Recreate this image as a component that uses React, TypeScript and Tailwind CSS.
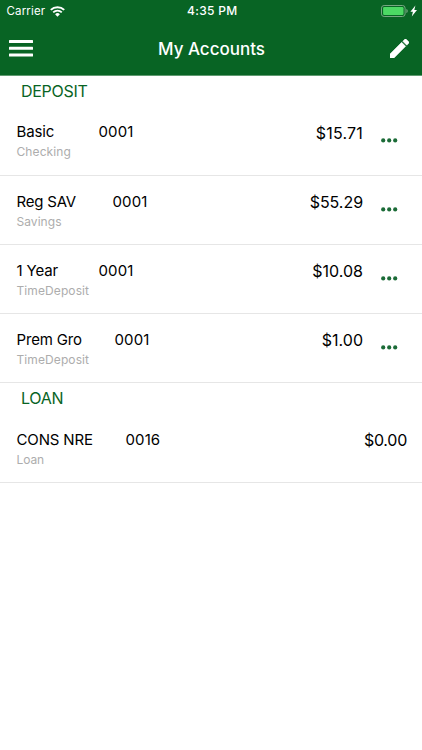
import React from 'react';

type Account = {
  name: string;
  nameClass: string;
  number: string;
  type: string;
  typeClass: string;
  balance: string;
  balanceClass: string;
  hasMenu: boolean;
};

const sections: { title: string; accounts: Account[] }[] = [
  {
    title: 'DEPOSIT',
    accounts: [
      { name: 'Basic', nameClass: 'w-[82px] tracking-[-0.15px]', number: '0001', type: 'Checking', typeClass: 'tracking-[0.1px]', balance: '$15.71', balanceClass: 'tracking-[0.2px]', hasMenu: true },
      { name: 'Reg SAV', nameClass: 'w-[96px] tracking-[-0.2px]', number: '0001', type: 'Savings', typeClass: 'tracking-[0.05px]', balance: '$55.29', balanceClass: 'tracking-[-0.05px]', hasMenu: true },
      { name: '1 Year', nameClass: 'w-[82px] tracking-[-0.15px]', number: '0001', type: 'TimeDeposit', typeClass: 'tracking-[0.1px]', balance: '$10.08', balanceClass: '', hasMenu: true },
      { name: 'Prem Gro', nameClass: 'w-[98px] tracking-[-0.15px]', number: '0001', type: 'TimeDeposit', typeClass: 'tracking-[0.1px]', balance: '$1.00', balanceClass: '', hasMenu: true },
    ],
  },
  {
    title: 'LOAN',
    accounts: [
      { name: 'CONS NRE', nameClass: 'w-[109px] tracking-[-0.15px]', number: '0016', type: 'Loan', typeClass: 'tracking-[-0.1px]', balance: '$0.00', balanceClass: 'tracking-[-0.25px]', hasMenu: false },
    ],
  },
];

function WifiIcon() {
  return (
    <svg width="15" height="11" viewBox="0 0 15 11" fill="none">
      <path d="M0.8 3.9a9.6 9.6 0 0 1 13.4 0" stroke="white" strokeWidth="2" />
      <path d="M3.2 6.4a6.1 6.1 0 0 1 8.6 0" stroke="white" strokeWidth="1.8" />
      <path d="M5.1 8.3a3.4 3.4 0 0 1 4.8 0L7.5 10.7z" fill="white" />
    </svg>
  );
}

function BatteryIcon() {
  return (
    <svg width="37" height="12" viewBox="0 0 37 12" fill="none">
      <rect x="0.5" y="0.5" width="23.6" height="11" rx="2.6" stroke="#78a783" />
      <rect x="2.1" y="2.1" width="20.4" height="7.8" rx="1.2" fill="#4cd964" />
      <path d="M25.4 4v4c.8-.3 1.3-1.1 1.3-2s-.5-1.7-1.3-2z" fill="#78a783" />
      <path d="M34.4 0.6 29.4 6.8h2.5L30.8 11.6l5.2-6.6h-2.7z" fill="white" />
    </svg>
  );
}

function MenuIcon() {
  return (
    <svg width="24" height="17" viewBox="0 0 24 17" fill="white">
      <rect y="0.1" width="24" height="2.9" rx="0.5" />
      <rect y="6.8" width="24" height="2.9" rx="0.5" />
      <rect y="13.5" width="24" height="2.9" rx="0.5" />
    </svg>
  );
}

function PencilIcon() {
  return (
    <svg width="19" height="19" viewBox="3 3 18 18" fill="white" stroke="white" strokeWidth="0.5">
      <path d="M3 17.25V21h3.75L17.81 9.94l-3.75-3.75L3 17.25zM20.71 7.04a1 1 0 0 0 0-1.41l-2.34-2.34a1 1 0 0 0-1.41 0l-1.83 1.83 3.75 3.75 1.83-1.83z" />
    </svg>
  );
}

function DotsIcon() {
  return (
    <svg width="17" height="5" viewBox="0 0 17 5" fill="#1b6b37">
      <circle cx="2.2" cy="2.4" r="2.1" />
      <circle cx="8.2" cy="2.4" r="2.1" />
      <circle cx="14.2" cy="2.4" r="2.1" />
    </svg>
  );
}

function AccountRow({ account }: { account: Account }) {
  return (
    <li className="flex h-[69.2px] items-start border-b border-[#e6e6e6] pl-[16.5px] text-black">
      <div className="flex-1 pt-[15.8px]">
        <div className="flex text-[15px] leading-5">
          <span className={account.nameClass}>{account.name}</span>
          <span className="tracking-[0.1px]">{account.number}</span>
        </div>
        <div className={`text-[12px] leading-5 text-[#adadad] ${account.typeClass}`}>{account.type}</div>
      </div>
      <span
        className={`pt-[16.3px] text-base leading-5 ${account.hasMenu ? 'pr-[18px]' : 'pr-[15px]'} ${account.balanceClass}`}
      >
        {account.balance}
      </span>
      {account.hasMenu && (
        <button className="mr-6 mt-[31px]" aria-label="More">
          <DotsIcon />
        </button>
      )}
    </li>
  );
}

export default function App() {
  return (
    <div className="min-h-screen bg-white font-['Inter','Liberation_Sans',sans-serif]">
      <header className="h-[76px] border-b border-[#5f9a70] bg-[#086424] text-white">
        <div className="grid h-[22px] grid-cols-3 items-center pl-[6.5px] pr-[4px]">
          <div className="flex items-center gap-[5px]">
            <span className="text-[11.5px] leading-4 tracking-[0.15px]">Carrier</span>
            <WifiIcon />
          </div>
          <span className="text-center text-[12px] font-medium leading-4 tracking-[0.3px]">4:35 PM</span>
          <div className="flex justify-end">
            <BatteryIcon />
          </div>
        </div>
        <div className="flex h-[52px] items-center justify-between pl-[9px] pr-[13px]">
          <button aria-label="Menu">
            <MenuIcon />
          </button>
          <h1 className="pt-[3px] text-[17px] font-medium">My Accounts</h1>
          <button aria-label="Edit">
            <PencilIcon />
          </button>
        </div>
      </header>

      <main>
        {sections.map((section) => (
          <section key={section.title}>
            <h2 className="h-[30.6px] pl-[21px] text-base leading-[30px] tracking-[-0.3px] text-[#086424]">
              {section.title}
            </h2>
            <ul>
              {section.accounts.map((account) => (
                <AccountRow key={account.name} account={account} />
              ))}
            </ul>
          </section>
        ))}
      </main>
    </div>
  );
}
